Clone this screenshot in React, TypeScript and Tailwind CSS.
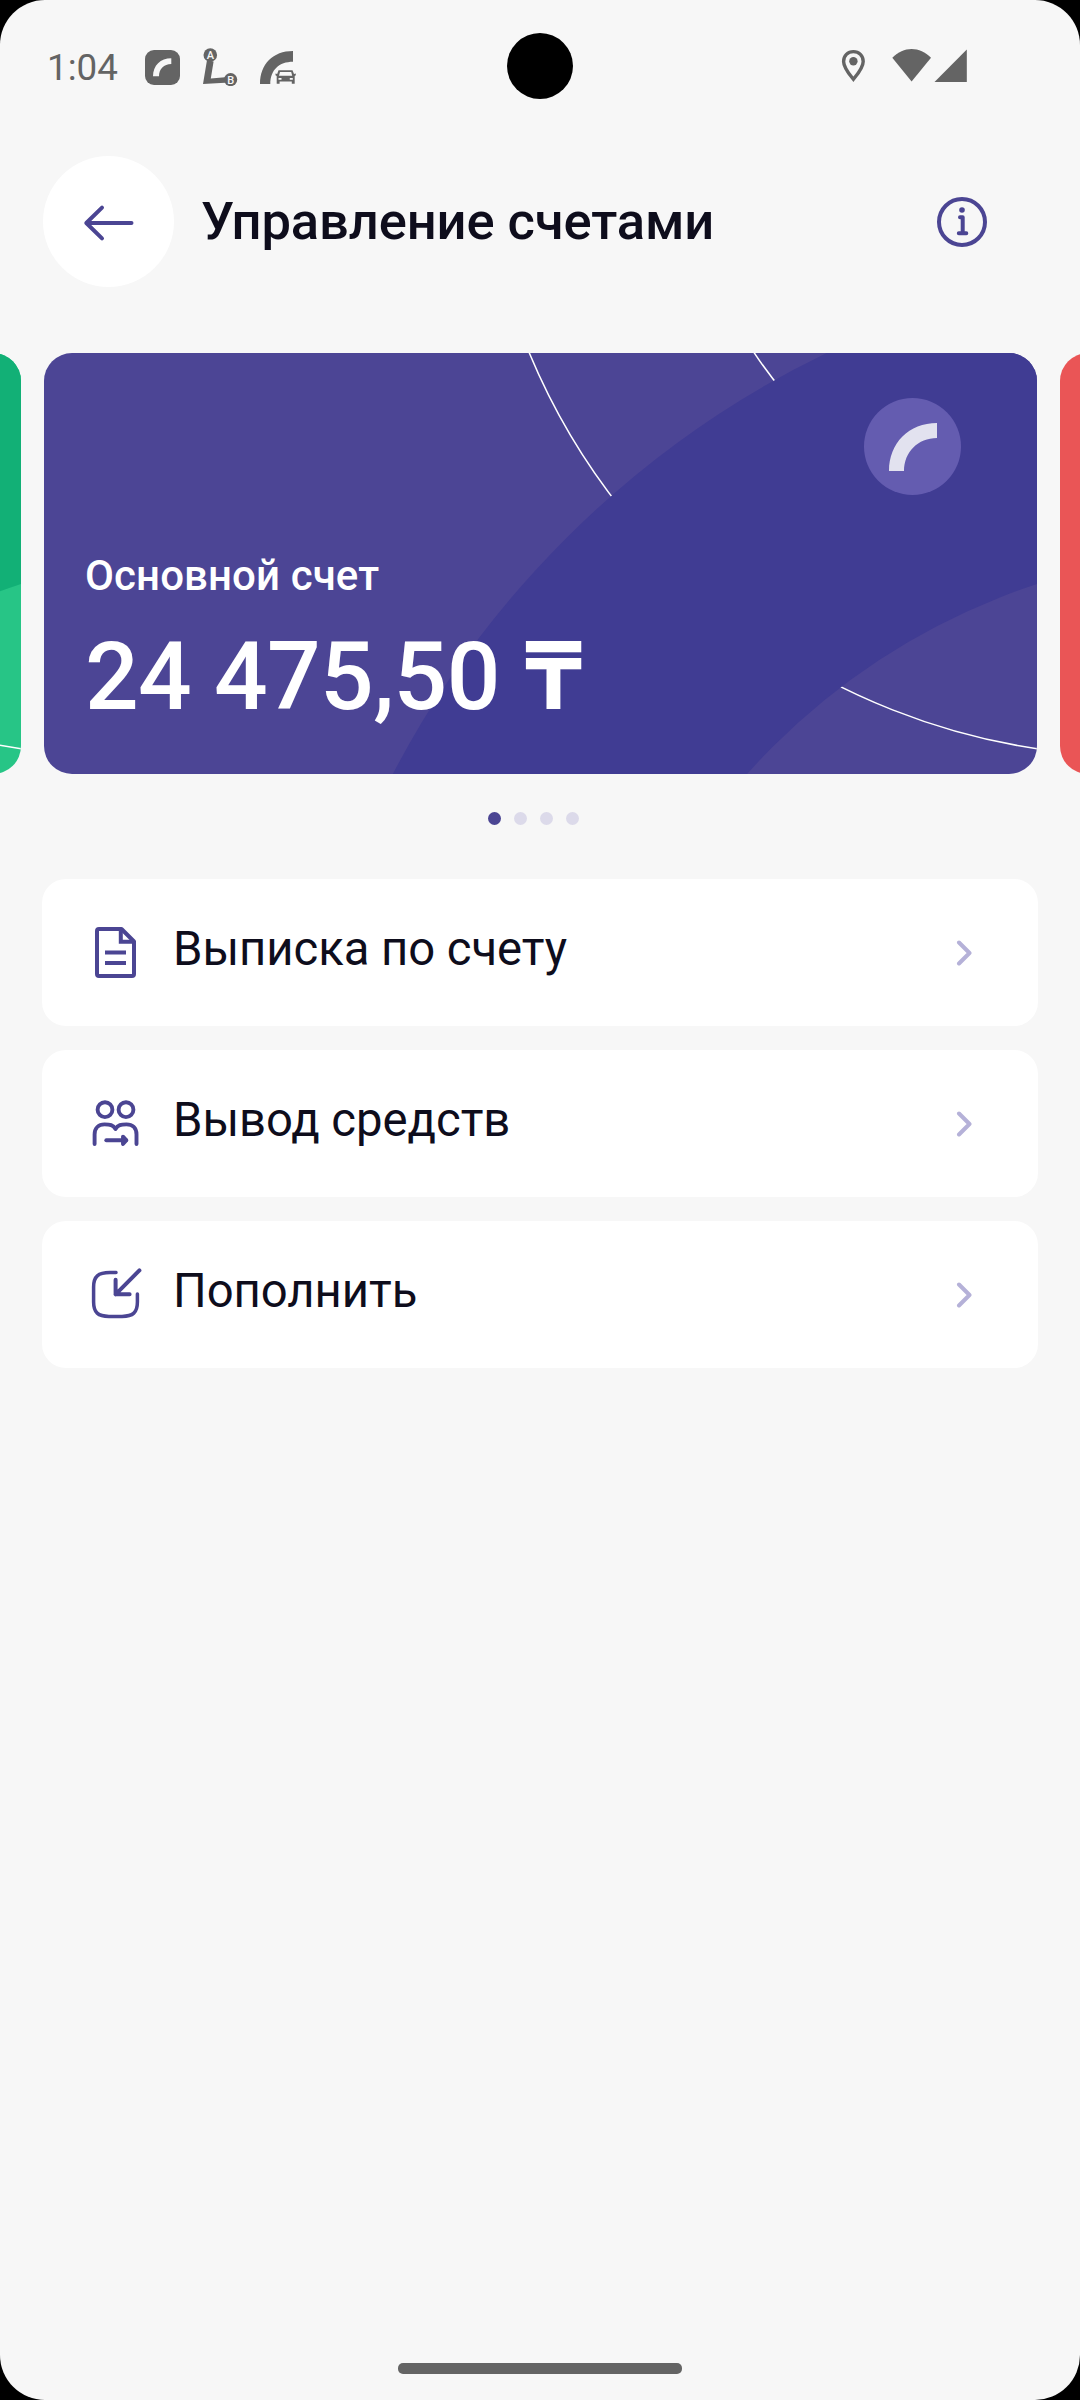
import type { ReactNode } from 'react'
import clsx from 'clsx'

const actions = [
  { title: 'Выписка по счету', icon: <StatementIcon /> },
  { title: 'Вывод средств', icon: <WithdrawIcon /> },
  { title: 'Пополнить', icon: <TopUpIcon /> },
]

function StatementIcon() {
  return (
    <svg
      className="h-[63px] w-[63px] text-[#4b4593]"
      viewBox="0 0 63 63"
      fill="none"
      stroke="currentColor"
      strokeWidth="4"
      strokeLinejoin="round"
    >
      <path d="M15 8H37.5L50 20.5V53a2 2 0 0 1-2 2H15a2 2 0 0 1-2-2V10a2 2 0 0 1 2-2Z" />
      <path d="M36.8 8V20.8H50" strokeLinejoin="miter" />
      <path d="M21 31.4H42M21 42H42" />
    </svg>
  )
}

function WithdrawIcon() {
  return (
    <svg
      className="h-[63px] w-[63px] text-[#4b4593]"
      viewBox="0 0 63 63"
      fill="none"
      stroke="currentColor"
      strokeWidth="3.9"
      strokeLinecap="round"
      strokeLinejoin="round"
    >
      <circle cx="21" cy="17.7" r="7.4" />
      <circle cx="42" cy="17.7" r="7.4" />
      <path d="M10.6 52V42.5C10.6 36 14.5 32.4 20.5 32.4C26 32.4 29 32.8 31.5 37C34 32.8 37 32.4 42.5 32.4C48.5 32.4 52.5 36 52.5 42.5V52" />
      <path d="M22.3 48.3H42" />
      <path d="M39 44.6L42.4 48.3L39 52Z" fill="currentColor" />
    </svg>
  )
}

function TopUpIcon() {
  return (
    <svg
      className="h-[63px] w-[63px] text-[#4b4593]"
      viewBox="0 0 63 63"
      fill="none"
      stroke="currentColor"
      strokeWidth="3.5"
      strokeLinecap="round"
      strokeLinejoin="round"
    >
      <path d="M32 9.6H26C14 9.6 9.6 13.5 9.6 24V39C9.6 49.5 14 53.4 25 53.4H38C49 53.4 53.4 49.5 53.4 39V31" />
      <path strokeWidth="4" d="M55.4 7.4L31.6 31.3M31.6 16.8V31.3H45.6" />
    </svg>
  )
}

function BrandArc({ className }: { className?: string }) {
  return (
    <svg className={className} viewBox="0 0 48 48">
      <path fill="currentColor" d="M0 48C0 20 20 0 48 0V15C29 15 15 29 15 48Z" />
    </svg>
  )
}

// Ring and thin arcs, shared by all account cards
function CardPattern({ id, ring }: { id: string; ring: string }) {
  return (
    <svg
      className="absolute inset-0 h-full w-full"
      viewBox="0 0 993 421"
      fill="none"
      preserveAspectRatio="none"
    >
      <defs>
        <mask id={id} maskUnits="userSpaceOnUse" x="0" y="0" width="993" height="421">
          <rect width="993" height="421" fill="white" />
          <circle cx="1202" cy="866" r="815.3" stroke="black" strokeWidth="293.6" />
        </mask>
      </defs>
      <circle className={ring} cx="1202" cy="866" r="815.3" strokeWidth="293.6" />
      <g stroke="white" strokeWidth="1.5" mask={`url(#${id})`}>
        <circle cx="1089.5" cy="-251.7" r="654.5" />
        <circle cx="1089.5" cy="-251.7" r="455" />
      </g>
    </svg>
  )
}

function AccountCard({
  id,
  color,
  ring,
  children,
}: {
  id: string
  color: string
  ring: string
  children?: ReactNode
}) {
  return (
    <div
      className={clsx(
        'relative h-[421px] w-[993px] shrink-0 overflow-hidden rounded-[28px]',
        color
      )}
    >
      <CardPattern id={id} ring={ring} />
      {children}
    </div>
  )
}

function StatusBar() {
  return (
    <div className="flex h-[132px] shrink-0 items-center justify-between pr-[112px] pl-[47px] text-[#646464]">
      <div className="flex items-center">
        <span className="mt-[4px] w-[98px] text-[36.75px] leading-[44px] whitespace-nowrap">
          1:04
        </span>
        <svg className="h-[40px] w-[154px]" viewBox="145 46 154 40">
          <rect x="145" y="50" width="35" height="35" rx="9" fill="currentColor" />
          <path
            d="M153 76.3C153 65.5 160.5 58.3 171.3 58.3V64C163.8 64 159 69 159 76.3Z"
            fill="#f7f7f7"
          />
          <g fill="currentColor">
            <path d="M207 60L213.6 61.5L210.8 78.4L225 77.3V82.7L203 84Z" />
            <circle cx="210.3" cy="55" r="6.8" />
            <circle cx="230.6" cy="79.6" r="6.6" />
          </g>
          <g fill="#f7f7f7" fontSize="11" fontWeight="500" textAnchor="middle">
            <text x="210.3" y="58.8">A</text>
            <text x="230.8" y="83.6">B</text>
          </g>
          <g fill="currentColor">
            <path d="M260 84C260 64 273 51 293 51V61.7C279 61.7 270.3 70 270.3 84Z" />
            <path
              fillRule="evenodd"
              d="M278.5 70.3H292.5L294 74L295.8 73.4V75.2L294.7 76V83.7H291.8V81.6H279.6V83.7H276.7V76L275.5 75.2V73.4L277.2 74ZM280 72L279 75.8H292.2L291.2 72ZM278.5 78V79.8H281.5V78ZM289.8 78V79.8H292.8V78Z"
            />
          </g>
        </svg>
      </div>
      <svg className="h-[34px] w-[127px]" viewBox="841 49 127 34">
        <path
          fill="none"
          stroke="currentColor"
          strokeWidth="3.4"
          d="M853.4 51.6C847.8 51.6 843.6 55.8 843.6 61.4C843.6 67.6 849 73.8 853.4 79.3C857.8 73.8 863.2 67.6 863.2 61.4C863.2 55.8 859 51.6 853.4 51.6Z"
        />
        <g fill="currentColor">
          <circle cx="853.4" cy="61.3" r="4.2" />
          <path d="M892.3 57.8C903.5 46.2 919.8 46.2 931 57.8L911.6 81.6Z" />
          <path d="M934.5 82H966.8V49.5Z" />
        </g>
      </svg>
    </div>
  )
}

function Header() {
  return (
    <header className="mt-[24px] flex h-[131px] shrink-0 items-center pr-[92px] pl-[43px]">
      <button className="flex h-[131px] w-[131px] items-center justify-center rounded-full bg-white">
        <svg
          className="h-[63px] w-[63px]"
          viewBox="77 190 63 63"
          fill="none"
          stroke="#4b4593"
          strokeWidth="4"
          strokeLinecap="round"
          strokeLinejoin="round"
        >
          <path d="M131.5 223H86.5M102 207.6L86.3 223L102 238.4" />
        </svg>
      </button>
      <h1 className="mt-[-2px] ml-[27px] text-[52.5px] leading-[62px] font-medium tracking-[-0.1px] whitespace-nowrap text-[#0e0d1c]">
        Управление счетами
      </h1>
      <svg
        className="ml-auto h-[52px] w-[52px]"
        viewBox="936 196 52 52"
        fill="none"
        stroke="#4b4593"
        strokeWidth="4"
        strokeLinecap="round"
        strokeLinejoin="round"
      >
        <circle cx="962" cy="222" r="23" />
        <path d="M960 217.3H962.7V233.3M958.8 233.3H966.3" />
        <circle cx="962" cy="210" r="2.8" fill="#4b4593" stroke="none" />
      </svg>
    </header>
  )
}

export default function App() {
  return (
    <div className="h-[2400px] w-[1080px] bg-black">
      <div className="relative flex h-full flex-col overflow-hidden rounded-[45px] bg-[#f7f7f7] font-['Roboto',sans-serif]">
        {/* camera cutout */}
        <div className="absolute top-[33px] left-[507px] h-[66px] w-[66px] rounded-full bg-black" />
        <StatusBar />
        <Header />

        <div className="mt-[66px] flex shrink-0 justify-center gap-[23px] pl-[1px]">
          <AccountCard id="green" color="bg-[#27c586]" ring="stroke-[#12b076]" />
          <AccountCard id="main" color="bg-[#4c4595]" ring="stroke-[#403c93]">
            <div className="relative flex h-full flex-col justify-end pb-[47px] pl-[41px] text-white">
              <span className="text-[42px] leading-[50px] font-medium tracking-[0.1px]">
                Основной счет
              </span>
              <span className="mt-[26px] text-[94.5px] leading-[100px] font-medium tracking-[-0.65px] whitespace-nowrap">
                24 475,50{' '}
                <span className="font-['Inter',sans-serif] text-[93px] leading-none font-bold">
                  ₸
                </span>
              </span>
            </div>
            <div className="absolute top-[45px] right-[76px] flex h-[97px] w-[97px] items-center justify-center rounded-full bg-[#645cb0]">
              <BrandArc className="h-[48px] w-[48px] text-[#e2e2ef]" />
            </div>
          </AccountCard>
          <AccountCard id="red" color="bg-[#ea5556]" ring="stroke-[#e03f45]" />
        </div>

        <div className="mt-[38px] flex shrink-0 justify-center gap-[13px] pr-[13px]">
          <div className="h-[13px] w-[13px] rounded-full bg-[#4b4593]" />
          <div className="h-[13px] w-[13px] rounded-full bg-[#dcdaea]" />
          <div className="h-[13px] w-[13px] rounded-full bg-[#dcdaea]" />
          <div className="h-[13px] w-[13px] rounded-full bg-[#dcdaea]" />
        </div>

        <div className="mt-[54px] flex flex-col gap-[24px] px-[42px]">
          {actions.map((action) => (
            <button
              key={action.title}
              className="flex h-[147px] items-center rounded-[24px] bg-white pr-[64px] pl-[42px] text-left"
            >
              {action.icon}
              <span className="mt-[-8px] ml-[26px] text-[47.25px] leading-[56px] tracking-[-0.05px] whitespace-nowrap text-[#0e0d1c]">
                {action.title}
              </span>
              <svg
                className="ml-auto h-[26px] w-[18px]"
                viewBox="0 0 18 26"
                fill="none"
                stroke="#b5b1d8"
                strokeWidth="4"
                strokeLinecap="round"
                strokeLinejoin="round"
              >
                <path d="M3 2.5L13.5 13L3 23.5" />
              </svg>
            </button>
          ))}
        </div>

        {/* gesture bar */}
        <div className="mx-auto mt-auto mb-[26px] h-[11px] w-[284px] shrink-0 rounded-[5px] bg-[#646464]" />
      </div>
    </div>
  )
}
